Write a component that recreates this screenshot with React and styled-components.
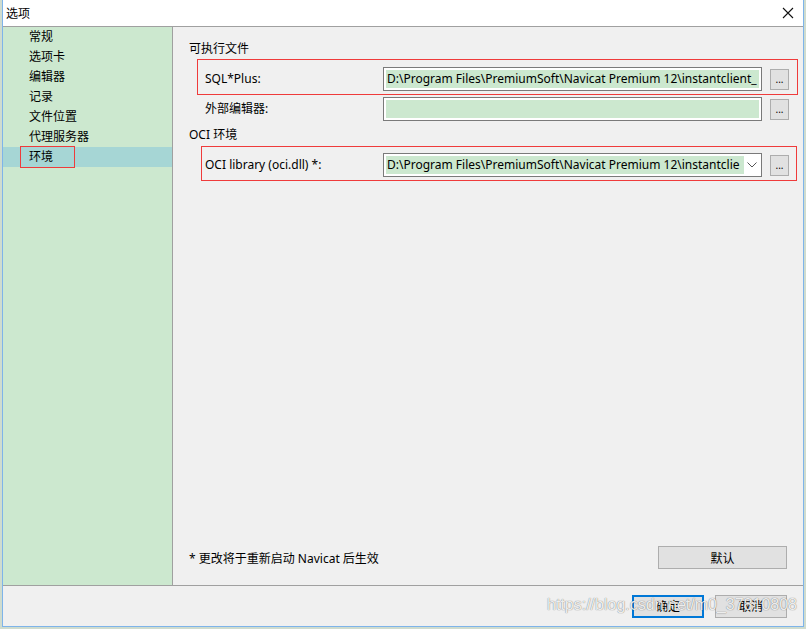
import React from "react"
import styled, { createGlobalStyle } from "styled-components"

const GlobalStyle = createGlobalStyle`
  html, body {
    margin: 0;
    padding: 0;
    background: #cfdccf;
  }
  body {
    font-family: "Noto Sans", "Noto Sans CJK SC", sans-serif;
    font-size: 12px;
    color: #000;
  }
`

const PATH = "D:\\Program Files\\PremiumSoft\\Navicat Premium 12\\instantclient_"
const OCI = "D:\\Program Files\\PremiumSoft\\Navicat Premium 12\\instantclie"

const navItems = ["常规", "选项卡", "编辑器", "记录", "文件位置", "代理服务器", "环境"]

const App = () => {
  return (
    <>
      <GlobalStyle />
      <Page>
        <Window>
          <TitleBar>
            <span>选项</span>
            <CloseButton>
              <svg width="12" height="12" viewBox="0 0 12 12">
                <path d="M1 1 L11 11 M11 1 L1 11" stroke="#111" strokeWidth="1.1" />
              </svg>
            </CloseButton>
          </TitleBar>

          <Body>
            <Sidebar>
              {navItems.map((item, i) => (
                <NavItem key={item} $active={i === navItems.length - 1}>
                  {item}
                  {i === navItems.length - 1 && <NavMark />}
                </NavItem>
              ))}
            </Sidebar>

            <Content>
              <Heading>可执行文件</Heading>
              <Row $marked $markLeft={8} $gap={9}>
                <Label>SQL*Plus:</Label>
                <TextBox>
                  <Filled $full>{PATH}</Filled>
                </TextBox>
                <Browse>...</Browse>
              </Row>
              <Row $gap={6}>
                <Label>外部编辑器:</Label>
                <TextBox>
                  <Filled $full />
                </TextBox>
                <Browse>...</Browse>
              </Row>

              <Heading $second>OCI 环境</Heading>
              <Row $marked $markLeft={12} $gap={9} $tall>
                <Label>OCI library (oci.dll) *:</Label>
                <TextBox $combo>
                  <Filled>{OCI}</Filled>
                  <Chevron>
                    <svg width="10" height="6" viewBox="0 0 10 6">
                      <path d="M0.5 0.5 L5 5 L9.5 0.5" fill="none" stroke="#555" strokeWidth="1" />
                    </svg>
                  </Chevron>
                </TextBox>
                <Browse>...</Browse>
              </Row>

              <Spacer />

              <BottomRow>
                <Note>* 更改将于重新启动 Navicat 后生效</Note>
                <Button $wide>默认</Button>
              </BottomRow>
            </Content>
          </Body>

          <Footer>
            <Button $primary>确定</Button>
            <Button>取消</Button>
            <Watermark>https://blog.csdn.net/m0_37810808</Watermark>
          </Footer>
        </Window>
      </Page>
    </>
  )
}

const Page = styled.div`
  width: 806px;
  height: 629px;
  padding-left: 2px;
  box-sizing: border-box;
  overflow: hidden;
`

const Window = styled.div`
  width: 802px;
  height: 627px;
  box-sizing: border-box;
  border: 1px solid #7eb4ea;
  border-top: none;
  background: #f0f0f0;
  display: flex;
  flex-direction: column;
`

const TitleBar = styled.div`
  height: 26px;
  background: #fff;
  border-bottom: 1px solid #a0a0a0;
  display: flex;
  align-items: center;
  justify-content: space-between;
  padding-left: 3px;
  font-size: 12px;
`

const CloseButton = styled.div`
  width: 30px;
  height: 26px;
  display: flex;
  align-items: center;
  justify-content: center;
`

const Body = styled.div`
  flex: 1;
  display: flex;
  border-bottom: 1px solid #a0a0a0;
  min-width: 0;
`

const Sidebar = styled.div`
  width: 169px;
  flex-shrink: 0;
  background: #cce8cf;
  border-right: 1px solid #a0a0a0;
`

const NavItem = styled.div`
  position: relative;
  height: 20px;
  line-height: 20px;
  padding-left: 26px;
  background: ${(p) => (p.$active ? "#a6d6d5" : "transparent")};
`

const NavMark = styled.span`
  position: absolute;
  left: 17px;
  top: -1px;
  width: 53px;
  height: 20px;
  border: 1px solid #ef3b3b;
`

const Content = styled.div`
  flex: 1;
  min-width: 0;
  display: flex;
  flex-direction: column;
  padding: 13px 16px 16px 16px;
`

const Heading = styled.div`
  height: 18px;
  line-height: 18px;
  margin-top: ${(p) => (p.$second ? "5px" : "0")};
`

const Row = styled.div`
  position: relative;
  display: flex;
  align-items: center;
  height: 24px;
  margin-top: ${(p) => p.$gap}px;
  padding-left: 16px;

  &::before {
    content: "";
    display: ${(p) => (p.$marked ? "block" : "none")};
    position: absolute;
    left: ${(p) => p.$markLeft}px;
    right: ${(p) => (p.$tall ? "-10px" : "-11px")};
    top: ${(p) => (p.$tall ? "-7px" : "-8px")};
    bottom: -4px;
    border: 1px solid #ef3b3b;
    pointer-events: none;
  }
`

const Label = styled.div`
  width: 178px;
  flex-shrink: 0;
  margin-top: -2px;
`

const TextBox = styled.div`
  width: 379px;
  flex-shrink: 0;
  height: 24px;
  box-sizing: border-box;
  border: 1px solid #7a7a7a;
  background: #fff;
  padding: 2px;
  display: flex;
  align-items: stretch;
  overflow: hidden;
  position: relative;
`

const Filled = styled.div`
  flex: ${(p) => (p.$full ? "1" : "0 0 357px")};
  min-width: 0;
  background: #cce8cf;
  white-space: nowrap;
  overflow: hidden;
  line-height: 18px;
  padding-left: 1px;
`

const Chevron = styled.div`
  flex: 1;
  display: flex;
  align-items: center;
  justify-content: center;
`

const Browse = styled.div`
  width: 19px;
  height: 21px;
  flex-shrink: 0;
  box-sizing: border-box;
  margin-left: 8px;
  background: #e1e1e1;
  border: 1px solid #adadad;
  font-size: 10px;
  line-height: 19px;
  text-align: center;
`

const Spacer = styled.div`
  flex: 1;
`

const BottomRow = styled.div`
  display: flex;
  align-items: center;
  justify-content: space-between;
`

const Note = styled.div`
  margin-top: 0;
`

const Button = styled.div`
  width: ${(p) => (p.$wide ? "129px" : "72px")};
  height: 23px;
  box-sizing: border-box;
  background: #e1e1e1;
  border: ${(p) => (p.$primary ? "2px solid #0078d7" : "1px solid #adadad")};
  display: flex;
  align-items: center;
  justify-content: center;
`

const Footer = styled.div`
  position: relative;
  height: 40px;
  display: flex;
  align-items: center;
  justify-content: flex-end;
  gap: 11px;
  padding-right: 16px;
`

const Watermark = styled.div`
  position: absolute;
  right: 6px;
  top: 10px;
  font-family: "Liberation Sans", Arial, sans-serif;
  font-size: 16px;
  color: rgba(255, 255, 255, 0.9);
  text-shadow: 0 0 1px rgba(0, 0, 0, 0.35), 0 0 1px rgba(0, 0, 0, 0.35);
  pointer-events: none;
  white-space: nowrap;
`

export default App
